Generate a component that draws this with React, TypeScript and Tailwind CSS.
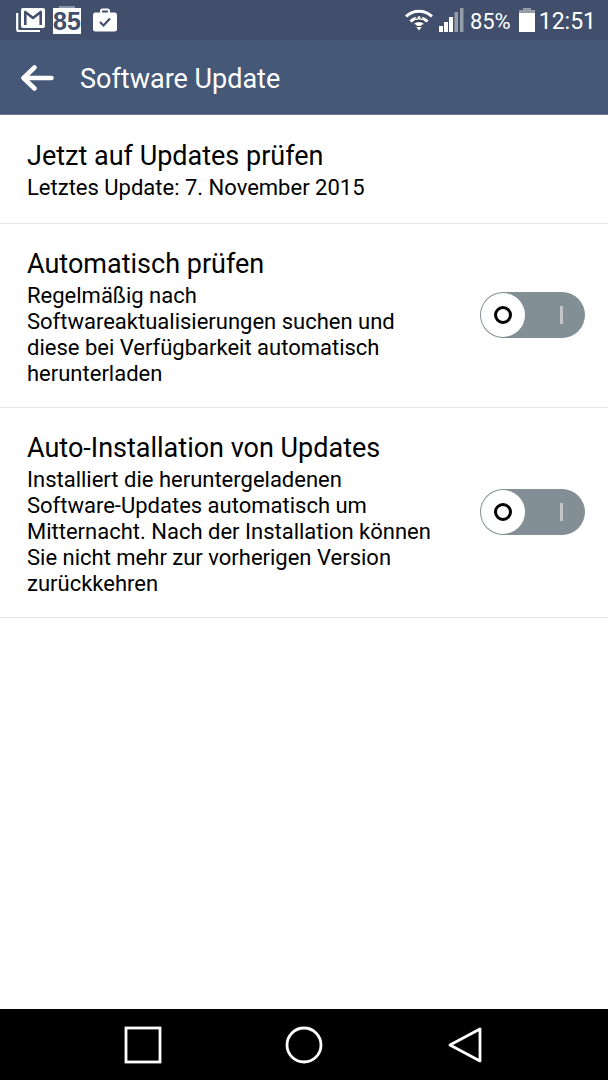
import { useState } from "react";

interface Setting {
  id: string;
  title: string;
  summary: string;
}

const settings: Setting[] = [
  {
    id: "auto-check",
    title: "Automatisch prüfen",
    summary:
      "Regelmäßig nach Softwareaktualisierungen suchen und diese bei Verfügbarkeit automatisch herunterladen",
  },
  {
    id: "auto-install",
    title: "Auto-Installation von Updates",
    summary:
      "Installiert die heruntergeladenen Software-Updates automatisch um Mitternacht. Nach der Installation können Sie nicht mehr zur vorherigen Version zurückkehren",
  },
];

function MailIcon() {
  return (
    <svg width="29" height="26" viewBox="0 0 29 26" fill="none">
      <path d="M1.200 6v16.500a1.500 1.500 0 0 0 1.500 1.500H24" stroke="#fff" strokeWidth="2.200" />
      <rect x="5" y="1" width="24" height="20" rx="2" fill="#fff" />
      <path d="M9.300 18V5l7.700 6 7.700-6v13" stroke="#414f6d" strokeWidth="2.600" strokeLinejoin="round" />
    </svg>
  );
}

function BatteryBadge() {
  return (
    <div className="flex w-7 flex-col items-center">
      <span className="h-[2px] w-4 bg-[#8d97a8]" />
      <span className="flex h-[26px] w-7 items-center justify-center bg-white font-['Liberation_Sans',sans-serif] text-[25px] font-bold leading-none text-[#414f6d]">
        85
      </span>
    </div>
  );
}

function BriefcaseIcon() {
  return (
    <svg width="24" height="24" viewBox="0 0 24 24" fill="none">
      <path d="M8 6V3a1.500 1.500 0 0 1 1.500-1.500h5A1.500 1.500 0 0 1 16 3v3" stroke="#fff" strokeWidth="2" />
      <rect x="0" y="4.500" width="24" height="19" rx="2.500" fill="#fff" />
      <path d="m7 14 3.500 3.500 6.500-7" stroke="#414f6d" strokeWidth="2.200" />
    </svg>
  );
}

function WifiIcon() {
  return (
    <svg width="28" height="22" viewBox="0 0 28 22" fill="none">
      <path d="M1 7.500a18.500 18.500 0 0 1 26 0" stroke="#fff" strokeWidth="3" />
      <path d="M5.500 12.500a12 12 0 0 1 17 0" stroke="#fff" strokeWidth="3" />
      <path d="M9 15a7 7 0 0 1 10 0L14 21.500Z" fill="#fff" />
      <path d="m14 5 4 4.500h-8Z" fill="#303338" />
      <path d="m14 6.500 2.500 3h-5Z" fill="#fff" />
      <path d="M9.500 12h9M9.500 15.500l2.500 2h4l2.500-2" stroke="#303338" strokeWidth="1.200" />
    </svg>
  );
}

function SignalIcon() {
  return (
    <svg width="25" height="24" viewBox="0 0 25 24">
      <path d="M0 18h4v6H0zM5 14h4v10H5zM10 9h4v15h-4z" fill="#fff" />
      <path d="M15.500 4h3.500v20h-3.500zM21 0h3.500v24H21z" fill="#959da8" />
    </svg>
  );
}

function BatteryIcon() {
  return (
    <svg width="16" height="24" viewBox="0 0 16 24">
      <path d="M4 0h8v2h4v3H0V2h4z" fill="#959da8" />
      <path d="M0 5h16v19H0z" fill="#fff" />
    </svg>
  );
}

function StatusBar() {
  return (
    <div className="flex h-10 items-center justify-between bg-[#414f6d] pl-4 pr-3 text-white">
      <div className="flex items-center gap-2">
        <MailIcon />
        <BatteryBadge />
        <span className="pl-1">
          <BriefcaseIcon />
        </span>
      </div>
      <div className="flex items-center gap-[6px]">
        <WifiIcon />
        <SignalIcon />
        <span className="pt-1 text-[22px] leading-8">85%</span>
        <div className="flex items-center gap-1 pl-[2px]">
          <BatteryIcon />
          <span className="pt-1 text-[23px] leading-8">12:51</span>
        </div>
      </div>
    </div>
  );
}

function Toggle({ id }: { id: string }) {
  const [on, setOn] = useState(false);

  return (
    <span className="relative mb-1 block h-[46px] w-[105px] shrink-0">
      <input
        id={id}
        type="checkbox"
        role="switch"
        checked={on}
        onChange={(e) => setOn(e.target.checked)}
        className="block h-full w-full cursor-pointer appearance-none rounded-full bg-[#829095]"
      />
      <span
        className={`pointer-events-none absolute top-px flex size-11 items-center justify-center rounded-full bg-white ${
          on ? "right-px" : "left-px"
        }`}
      >
        <span className={on ? "h-[18px] w-[3px] bg-black" : "size-[18px] rounded-full border-3 border-black"} />
      </span>
      <span
        className={`pointer-events-none absolute ${
          on
            ? "left-[14px] top-[14px] size-[18px] rounded-full border-3 border-[#c3c6c9]"
            : "right-[22px] top-[14px] h-[18px] w-[3px] bg-[#c3c6c9]"
        }`}
      />
    </span>
  );
}

export default function App() {
  return (
    <div className="flex min-h-screen flex-col bg-white font-['Roboto',sans-serif] text-black">
      <StatusBar />

      <header className="flex h-[75px] items-center gap-[26px] border-b border-[#6a7891] bg-[#465878] pl-5 pt-1 text-white">
        <button type="button" aria-label="Zurück">
          <svg width="34" height="28" viewBox="0 0 34 28" fill="none">
            <path
              d="M14.500 2.500 3.500 13 14.500 23.500M3.500 13h28"
              stroke="#fff"
              strokeWidth="4.500"
              strokeLinecap="round"
              strokeLinejoin="round"
            />
          </svg>
        </button>
        <h1 className="text-[27px]">Software Update</h1>
      </header>

      <main className="flex-1">
        <button
          type="button"
          className="flex min-h-[109px] w-full flex-col justify-center border-b border-[#e6e7e8] px-[27px] text-left"
        >
          <span className="text-[27px] leading-[37px]">Jetzt auf Updates prüfen</span>
          <span className="text-[22px] leading-[26px]">Letztes Update: 7. November 2015</span>
        </button>

        {/* Einstellungen mit Schalter */}
        {settings.map((item) => (
          <div
            key={item.id}
            className="flex items-center gap-10 border-b border-[#e6e7e8] pb-5 pl-[27px] pr-[23px] pt-[22px]"
          >
            <label htmlFor={item.id} className="flex-1">
              <span className="block text-[27px] leading-[37px]">{item.title}</span>
              <span className="block text-[22px] leading-[26px]">{item.summary}</span>
            </label>
            <Toggle id={item.id} />
          </div>
        ))}
      </main>

      {/* Navigationsleiste */}
      <nav className="grid h-[71px] grid-cols-3 place-items-center bg-black px-[62px]">
        <button type="button" aria-label="Übersicht">
          <svg width="38" height="38" viewBox="0 0 38 38" fill="none" stroke="#fff" strokeWidth="2.800">
            <rect x="2" y="2" width="34" height="34" />
          </svg>
        </button>
        <button type="button" aria-label="Startseite">
          <svg width="38" height="38" viewBox="0 0 38 38" fill="none" stroke="#fff" strokeWidth="2.800">
            <circle cx="19" cy="19" r="17" />
          </svg>
        </button>
        <button type="button" aria-label="Zurück">
          <svg width="38" height="38" viewBox="0 0 38 38" fill="none" stroke="#fff" strokeWidth="2.800">
            <path d="M34 3v32L4 19Z" strokeLinejoin="round" />
          </svg>
        </button>
      </nav>
    </div>
  );
}
